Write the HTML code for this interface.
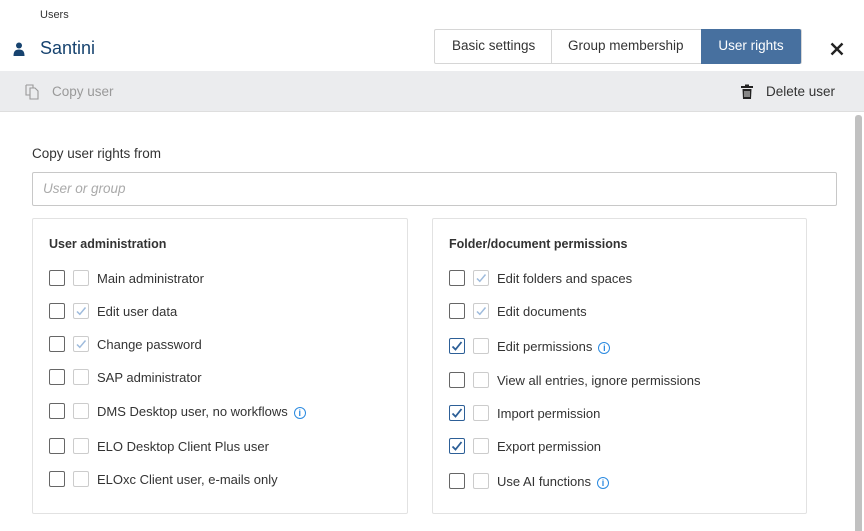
<!DOCTYPE html>
<html><head><meta charset="utf-8"><style>
*{box-sizing:border-box;margin:0;padding:0}
body{width:864px;height:531px;overflow:hidden;background:#fff;font-family:"Liberation Sans",sans-serif;color:#333;position:relative;font-size:13px}
.a{position:absolute;white-space:nowrap}
.cb{position:absolute;width:16px;height:16px;border:1px solid #666;border-radius:2px;background:#fff}
.cb2{position:absolute;width:16px;height:16px;border:1px solid #ccc;border-radius:2px;background:#fff}
.cb svg,.cb2 svg{position:absolute;left:1px;top:1px}
.lbl{position:absolute;font-size:13px;color:#333;line-height:16px}
.info{display:inline-block;width:12px;height:12px;border:1.3px solid #2b8ae0;border-radius:50%;color:#2b8ae0;font-size:9px;line-height:10px;text-align:center;font-weight:bold;margin-left:6px;vertical-align:0px}
</style></head><body>
<div class="a" style="left:40px;top:9px;font-size:11px;color:#333">Users</div>
<svg class="a" style="left:13px;top:42px" width="12" height="14" viewBox="0 0 12 14"><circle cx="6" cy="3.5" r="3" fill="#17436f"/><path d="M0.5 14 C0.5 9 2.5 7.5 6 7.5 C9.5 7.5 11.5 9 11.5 14Z" fill="#17436f"/></svg>
<div class="a" style="left:40px;top:38px;font-size:18px;color:#17436f">Santini</div>
<div class="a" style="left:434px;top:29px;width:368px;height:35px;border:1px solid #d6d6d6;border-radius:2px"></div>
<div class="a" style="left:551px;top:29px;width:1px;height:35px;background:#d6d6d6"></div>
<div class="a" style="left:452px;top:38px;font-size:13.5px">Basic settings</div>
<div class="a" style="left:568px;top:38px;font-size:13.5px">Group membership</div>
<div class="a" style="left:701px;top:29px;width:100px;height:35px;background:#47709f;border-radius:0 2px 2px 0;color:#fff;font-size:13.5px;text-align:center;line-height:33px">User rights</div>
<svg class="a" style="left:830px;top:42px" width="14" height="14" viewBox="0 0 14 14"><path d="M1.5 1.5L12.5 12.5M12.5 1.5L1.5 12.5" stroke="#222" stroke-width="2.4"/></svg>
<div class="a" style="left:0;top:71px;width:864px;height:41px;background:#ebecee;border-bottom:1px solid #dedede"></div>
<svg class="a" style="left:25px;top:84px" width="16" height="16" viewBox="0 0 16 16"><path d="M1 1H8V4M1 1V11H5" fill="none" stroke="#999" stroke-width="1.1"/><path d="M5 4H10L13 7V15H5Z" fill="none" stroke="#999" stroke-width="1.1"/></svg>
<div class="a" style="left:52px;top:84px;font-size:13.5px;color:#999">Copy user</div>
<svg class="a" style="left:740px;top:84px" width="14" height="16" viewBox="0 0 14 16"><rect x="1" y="2" width="12" height="2" fill="#222"/><rect x="5" y="0.5" width="4" height="2" fill="#222"/><path d="M2.5 5H11.5L11 15H3Z" fill="#222"/><path d="M5 7V13M7 7V13M9 7V13" stroke="#fff" stroke-width="0.9"/></svg>
<div class="a" style="left:766px;top:84px;font-size:13.5px;color:#333">Delete user</div>
<div class="a" style="left:855px;top:115px;width:7px;height:416px;background:#c1c1c1;border-radius:3px 3px 0 0"></div>
<div class="a" style="left:32px;top:146px;font-size:13.5px">Copy user rights from</div>
<div class="a" style="left:32px;top:172px;width:805px;height:34px;border:1px solid #c8c8c8;border-radius:2px"></div>
<div class="a" style="left:43px;top:181px;font-size:13.5px;font-style:italic;color:#aaa">User or group</div>
<div class="a" style="left:32px;top:218px;width:376px;height:296px;border:1px solid #e2e2e2;border-radius:2px"></div>
<div class="a" style="left:432px;top:218px;width:375px;height:296px;border:1px solid #e2e2e2;border-radius:2px"></div>
<div class="a" style="left:49px;top:237px;font-size:12.5px;font-weight:bold;color:#333">User administration</div>
<div class="a" style="left:449px;top:237px;font-size:12.5px;font-weight:bold;color:#333">Folder/document permissions</div>
<div id="rows"></div>
<script>
var gck='<svg width="12" height="12" viewBox="0 0 12 12"><path d="M2 6.5L4.8 9.3L10.5 2.5" fill="none" stroke="#9fbbdc" stroke-width="1.5"/></svg>';
var bck='<svg width="12" height="12" viewBox="0 0 12 12"><path d="M1.5 6.5L4.5 9.5L10.5 2" fill="none" stroke="#2d5f97" stroke-width="1.8"/></svg>';
var L=[[278,0,0,"Main administrator"],[311,0,1,"Edit user data"],[344,0,1,"Change password"],[377,0,0,"SAP administrator"],[411,0,0,"DMS Desktop user, no workflows",1],[446,0,0,"ELO Desktop Client Plus user"],[479,0,0,"ELOxc Client user, e-mails only"]];
var R=[[278,0,1,"Edit folders and spaces"],[311,0,1,"Edit documents"],[346,1,0,"Edit permissions",1],[380,0,0,"View all entries, ignore permissions"],[413,1,0,"Import permission"],[446,1,0,"Export permission"],[481,0,0,"Use AI functions",1]];
var h='';
function add(arr,x){arr.forEach(function(r){var y=r[0]-8;
h+='<div class="cb" style="left:'+x+'px;top:'+y+'px;'+(r[1]?'border-color:#2d5f97':'')+'">'+(r[1]?bck:'')+'</div>';
h+='<div class="cb2" style="left:'+(x+24)+'px;top:'+y+'px">'+(r[2]?gck:'')+'</div>';
h+='<div class="lbl" style="left:'+(x+48)+'px;top:'+(y+1)+'px">'+r[3]+(r[4]?'<span class="info">i</span>':'')+'</div>';});}
add(L,49);add(R,449);
document.getElementById('rows').innerHTML=h;
</script>
</body></html>
